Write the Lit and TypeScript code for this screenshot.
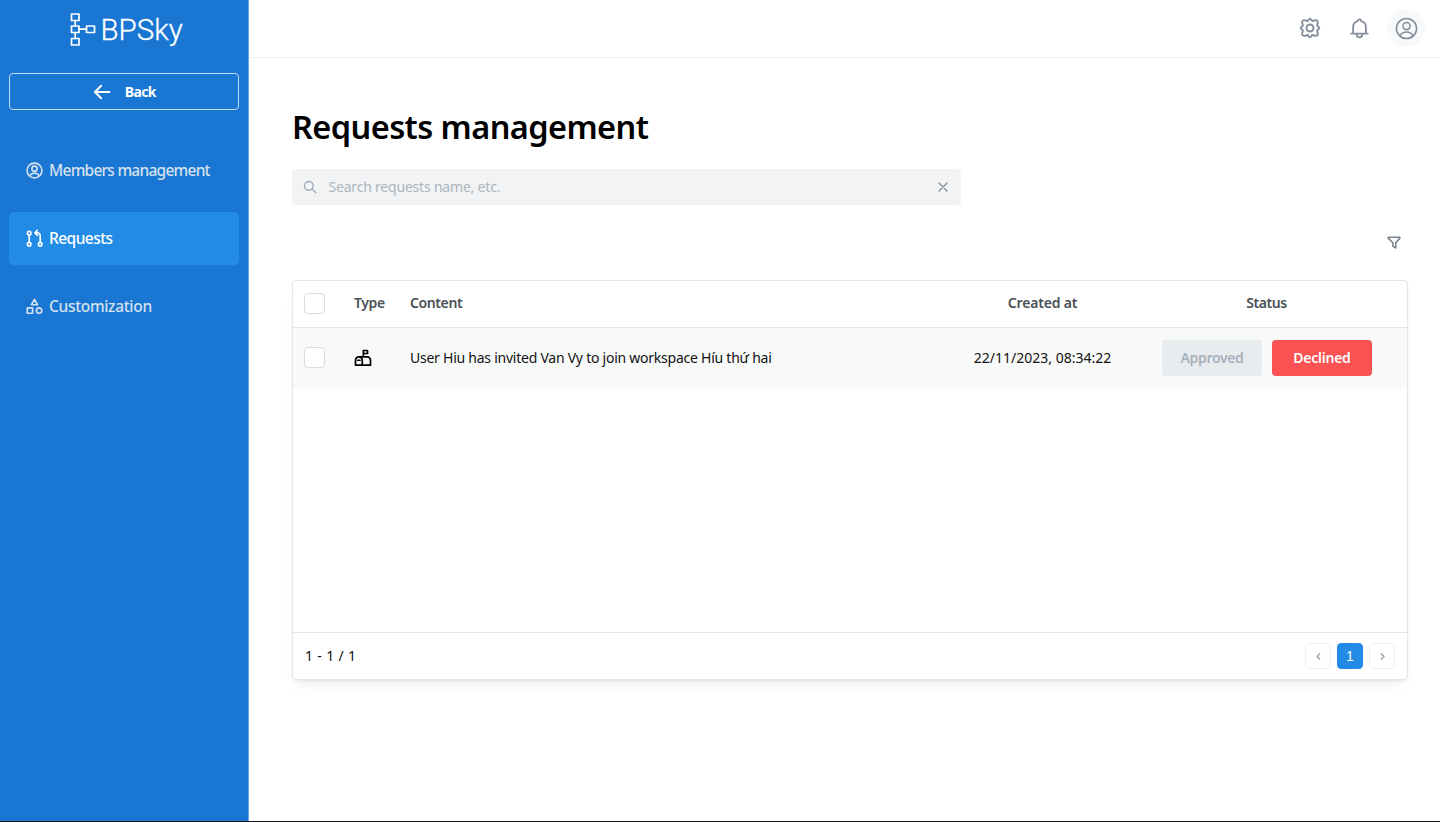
import { LitElement, html, svg, css } from "lit";
import { customElement, property } from "lit/decorators.js";

const icons: Record<string, unknown> = {
  logo: svg`<g fill="none" stroke="currentColor" stroke-width="1.7"><rect x="1.500" y="1" width="7.500" height="6.500"/><rect x="1.500" y="13" width="7.500" height="6.500"/><rect x="1.500" y="25.500" width="7.500" height="6.500"/><rect x="16.500" y="13" width="8" height="6.500"/><path d="M5.200 7.500V13M5.200 19.500v6M9 16.200h7.500"/></g>`,
  back: svg`<path d="M21 12H4M11 4.500L3.500 12L11 19.500" stroke-width="2.300"/>`,
  user: svg`<circle cx="12" cy="12" r="10.500"/><circle cx="12" cy="9.500" r="3.700"/><path d="M5.500 19c1.500-2.300 3.800-3.300 6.500-3.300s5 1 6.500 3.300"/>`,
  pull: svg`<circle cx="4.500" cy="4.500" r="2.500"/><circle cx="4.500" cy="20" r="2.500"/><circle cx="20" cy="20" r="2.500"/><path d="M4.500 7v10.500M20 17.500V8a4 4 0 0 0-4-4h-3M16 .5L12.500 4l3.500 3.500"/>`,
  shapes: svg`<path d="M12 2L16.300 9.500H7.700zM1.800 14h7.500v7.500H1.800z"/><circle cx="18.500" cy="17.700" r="3.800"/>`,
  gear: svg`<circle cx="12" cy="12" r="3.800"/><path d="M10.300 3.400 Q12 .1 13.700 3.400 Q14.300 4.600 15.600 4.100 Q19.300 2.800 19.900 4.100 Q21.200 4.700 19.900 8.400 Q19.400 9.700 20.600 10.300 Q23.900 12 20.600 13.700 Q19.400 14.300 19.900 15.600 Q21.200 19.300 19.900 19.900 Q19.300 21.200 15.600 19.900 Q14.300 19.400 13.700 20.600 Q12 23.900 10.300 20.600 Q9.700 19.400 8.400 19.900 Q4.700 21.200 4.100 19.900 Q2.800 19.300 4.100 15.600 Q4.600 14.300 3.400 13.700 Q.1 12 3.400 10.300 Q4.600 9.700 4.100 8.400 Q2.800 4.700 4.100 4.100 Q4.700 2.800 8.400 4.100 Q9.700 4.600 10.300 3.400Z"/>`,
  bell: svg`<path d="M2.500 18.500h19M4.700 18.500V11c0-3.700 2.200-6 5.300-6.800a2 2 0 0 1 4 0c3.100.8 5.300 3.100 5.300 6.800v7.500M8.800 19a3.200 3.600 0 0 0 6.400 0"/>`,
  search: svg`<circle cx="10" cy="10" r="7.500"/><path d="M15.500 15.500L22 22"/>`,
  close: svg`<path d="M4 4l16 16M20 4L4 20"/>`,
  funnel: svg`<path d="M2 3h20v1.500L15 12.500v9l-5-3.500v-5.500L2 4.500z"/>`,
  mailbox: svg`<path d="M6.500 10.500h11a4.500 4.500 0 0 1 4.500 4.500v6.500H2V15a4.500 4.500 0 0 1 9 0v6.500M12.500 10.500V2h5.500v4h-5.500M5 15h3"/>`,
  left: svg`<path d="M15 5l-7 7 7 7"/>`,
  right: svg`<path d="M9 5l7 7-7 7"/>`,
};

@customElement("ui-icon")
class UiIcon extends LitElement {
  @property() name = "";
  static styles = css`
    :host { display: block; flex: none; }
    svg { display: block; width: 100%; height: 100%; fill: none; stroke: currentColor; stroke-width: var(--stroke, 2); stroke-linejoin: round; stroke-linecap: round; overflow: visible; }
  `;
  render() {
    return html`<svg viewBox=${this.name === "logo" ? "0 0 26 33" : "0 0 24 24"}>${icons[this.name]}</svg>`;
  }
}

@customElement("app-root")
class AppRoot extends LitElement {
  static styles = css`
    :host { display: grid; grid-template-columns: 249px 1fr; height: 822px; box-sizing: border-box; border-bottom: 1px solid #15171c; background: #fff; color: #111; font: 14px/20px "Noto Sans", "Open Sans", sans-serif; white-space: nowrap; overflow: hidden; }
    * { box-sizing: border-box; }
    .sidebar { background: #1976d2; border-right: 1px solid #69a6e4; padding: 12px 9px 0; color: #fff; }
    .brand { display: flex; height: 34px; padding-left: 60.500px; gap: 5px; align-items: center; }
    .brand ui-icon { width: 26px; height: 33px; }
    .brand span { font: 300 29.500px/34px Roboto, sans-serif; letter-spacing: 0; padding-top: 2px; -webkit-text-stroke: .3px #fff; }
    .back { display: flex; align-items: center; justify-content: center; gap: 12.500px; height: 37px; margin-top: 27px; padding: 0; border: 1px solid #c5dcf5; border-radius: 4px; font-weight: 700; font-size: 14px; letter-spacing: -.7px; }
    .back ui-icon { width: 20px; height: 20px; }
    .nav { display: grid; gap: 15px; margin-top: 34px; }
    .item { display: flex; align-items: center; gap: 6.500px; height: 53px; padding: 0 0 1px 16.500px; border-radius: 5px; font-size: 15.500px; font-weight: 500; color: #d5e1ef; }
    .item ui-icon { width: 17px; height: 17px; --stroke: 2.300; }
    .members { letter-spacing: -.75px; }
    .requests { letter-spacing: -.55px; }
    .custom { letter-spacing: -.32px; }
    .active { background: #228be6; color: #fff; }
    .main { display: flex; flex-direction: column; min-width: 0; }
    .top { display: flex; align-items: center; justify-content: flex-end; height: 58px; border-bottom: 1px solid #eeeff0; padding: 0 15px 1px 0; color: #868e9c; }
    .top .gear { width: 22px; height: 22px; margin-right: 28px; --stroke: 2.100; }
    .top .bell { width: 21px; height: 22px; margin-right: 17px; --stroke: 2.100; }
    .avatar { display: grid; place-items: center; width: 38px; height: 38px; border-radius: 50%; background: #f8f9fa; }
    .avatar ui-icon { width: 23px; height: 23px; --stroke: 1.600; }
    .content { padding: 45px 32px 0 43px; }
    h1 { margin: 0; font-size: 32.500px; line-height: 47px; padding-bottom: 1px; font-weight: 600; color: #000; letter-spacing: -.57px; }
    .search { display: flex; align-items: center; width: 669px; height: 36px; margin-top: 17.500px; padding: 0 12px 0 10.500px; border-radius: 4px; background: #f1f3f5; color: #adb5bd; letter-spacing: -.2px; }
    .search .lens { width: 14px; height: 14px; margin-right: 12px; color: #a1abb8; --stroke: 2.300; }
    .search .clear { width: 12px; height: 12px; margin-left: auto; color: #868e96; --stroke: 2.700; }
    .tools { display: flex; justify-content: flex-end; align-items: center; height: 75.500px; padding-right: 7px; color: #79838e; }
    .tools ui-icon { width: 14px; height: 15px; --stroke: 2.700; }
    .card { display: flex; flex-direction: column; height: 400px; border: 1px solid #e1e6ea; border-radius: 4px; box-shadow: 0 1px 3px #0000000d, 0 10px 15px -5px #0000000d, 0 7px 7px -5px #0000000a; }
    .row { display: grid; grid-template-columns: 50px 56px 539px 187px 1fr; align-items: center; height: 47px; padding: 0 0 2px 11px; border-bottom: 1px solid #e1e7eb; }
    .head { color: #495057; font-weight: 600; letter-spacing: -.4px; }
    .entry { height: 60px; padding-bottom: 1px; background: #f8faf9; border: 0; }
    .check { width: 21px; height: 21px; border: 1px solid #d7dce3; border-radius: 4px; background: #fff; }
    .type { width: 18px; height: 18px; --stroke: 2.300; color: #000; }
    .center { text-align: center; }
    .h-created { letter-spacing: -.2px; }
    .message { letter-spacing: -.245px; }
    .status { padding-left: 13px; padding-right: 23px; }
    .actions { display: flex; gap: 10px; padding-left: 26px; }
    .button { width: 100px; height: 36px; border-radius: 4px; font-weight: 600; line-height: 36px; text-align: center; letter-spacing: -.35px; }
    .approved { background: #e9ecef; color: #a6b1bd; }
    .declined { background: #fa5252; color: #fff; letter-spacing: -.25px; }
    .foot { display: flex; align-items: center; justify-content: space-between; height: 47px; margin-top: auto; padding: 0 12px; border-top: 1px solid #e1e6ea; }
    .range { letter-spacing: .35px; }
    .pages { display: flex; gap: 6px; }
    .page { display: grid; place-items: center; width: 26px; height: 26px; border: 1px solid #eceff2; border-radius: 4px; color: #a3abb6; }
    .page ui-icon { width: 9px; height: 9px; --stroke: 4; }
    .current { background: #228be6; border-color: #228be6; color: #fff; font: 500 14px/20px "Liberation Sans", sans-serif; }
  `;
  render() {
    return html`
      <aside class="sidebar">
        <div class="brand"><ui-icon name="logo"></ui-icon><span>BPSky</span></div>
        <div class="back"><ui-icon name="back"></ui-icon><span>Back</span></div>
        <nav class="nav">
          <div class="item"><ui-icon name="user"></ui-icon><span class="members">Members management</span></div>
          <div class="item active"><ui-icon name="pull"></ui-icon><span class="requests">Requests</span></div>
          <div class="item"><ui-icon name="shapes"></ui-icon><span class="custom">Customization</span></div>
        </nav>
      </aside>
      <main class="main">
        <header class="top"><ui-icon class="gear" name="gear"></ui-icon><ui-icon class="bell" name="bell"></ui-icon><div class="avatar"><ui-icon name="user"></ui-icon></div></header>
        <section class="content">
          <h1>Requests management</h1>
          <div class="search"><ui-icon class="lens" name="search"></ui-icon><span>Search requests name, etc.</span><ui-icon class="clear" name="close"></ui-icon></div>
          <div class="tools"><ui-icon name="funnel"></ui-icon></div>
          <div class="card">
            <div class="row head"><div class="check"></div><span>Type</span><span>Content</span><span class="center h-created">Created at</span><span class="center status">Status</span></div>
            <div class="row entry"><div class="check"></div><ui-icon class="type" name="mailbox"></ui-icon><span class="message">User Hiu has invited Van Vy to join workspace Híu thứ hai</span><span class="center">22/11/2023, 08:34:22</span><div class="actions"><div class="button approved">Approved</div><div class="button declined">Declined</div></div></div>
            <div class="foot"><span class="range">1 - 1 / 1</span><div class="pages"><div class="page"><ui-icon name="left"></ui-icon></div><div class="page current">1</div><div class="page"><ui-icon name="right"></ui-icon></div></div></div>
          </div>
        </section>
      </main>`;
  }
}
